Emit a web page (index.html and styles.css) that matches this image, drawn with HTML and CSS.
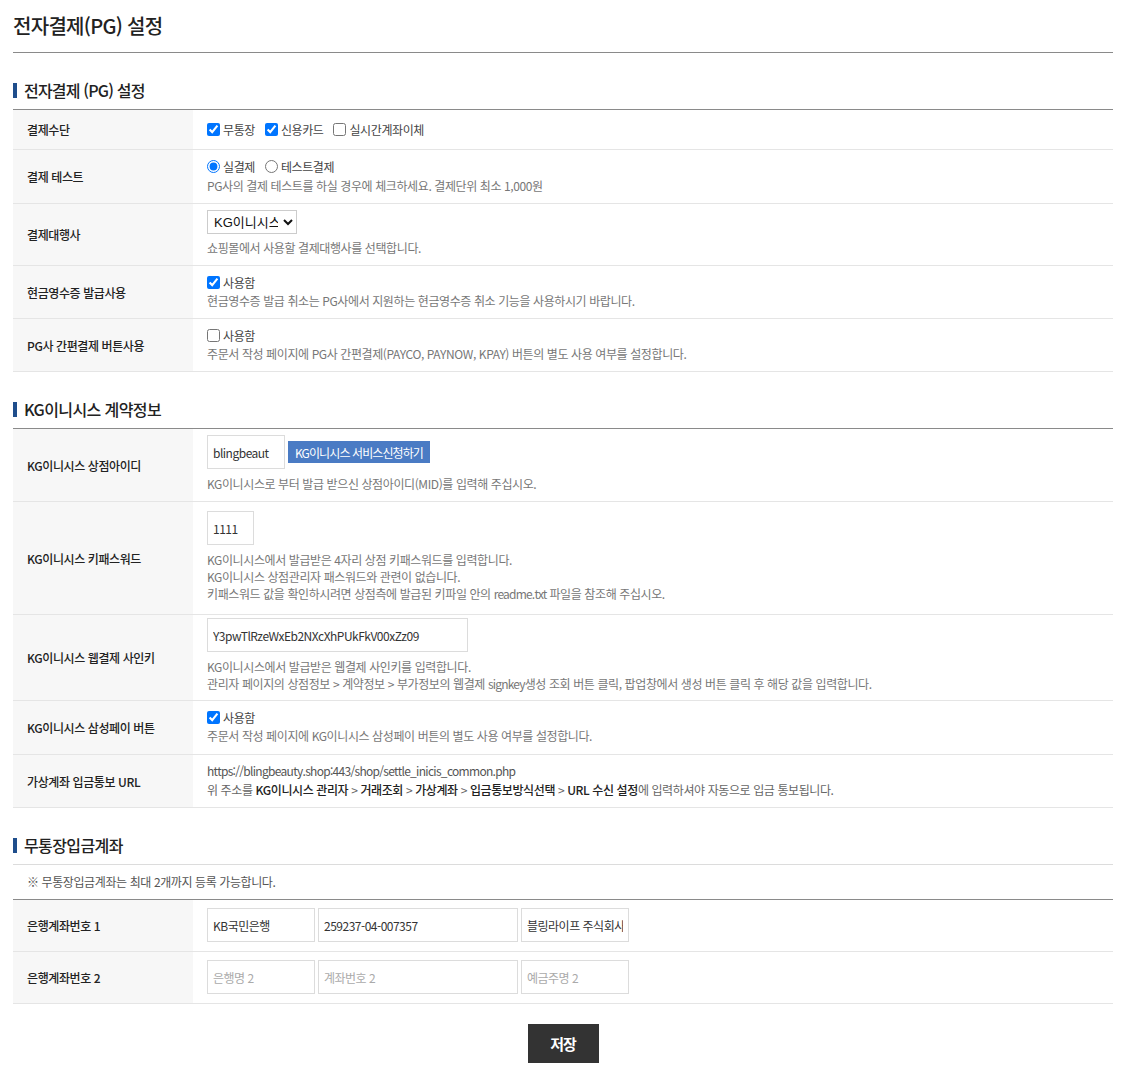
FILE: index.html
```html
<!DOCTYPE html>
<html lang="ko">
<head>
<meta charset="utf-8">
<title>전자결제(PG) 설정</title>
<link rel="stylesheet" href="styles.css">
</head>
<body>
<div class="page">
  <h1 class="page-title">전자결제(PG) 설정</h1>

  <section class="sec">
    <h2 class="sec-title t-pg">전자결제 (PG) 설정</h2>
    <div class="form">
      <div class="row">
        <div class="th">결제수단</div>
        <div class="td td-single">
          <div class="opts">
            <label class="opt"><input type="checkbox" checked>무통장</label>
            <label class="opt"><input type="checkbox" checked>신용카드</label>
            <label class="opt"><input type="checkbox">실시간계좌이체</label>
          </div>
        </div>
      </div>
      <div class="row">
        <div class="th">결제 테스트</div>
        <div class="td">
          <div class="opts opts-radio">
            <label class="opt"><input type="radio" name="test" checked>실결제</label>
            <label class="opt"><input type="radio" name="test">테스트결제</label>
          </div>
          <p class="desc">PG사의 결제 테스트를 하실 경우에 체크하세요. 결제단위 최소 1,000원</p>
        </div>
      </div>
      <div class="row">
        <div class="th">결제대행사</div>
        <div class="td">
          <div class="ctrl ctrl-sel">
            <select class="sel"><option>KG이니시스</option></select>
          </div>
          <p class="desc">쇼핑몰에서 사용할 결제대행사를 선택합니다.</p>
        </div>
      </div>
      <div class="row">
        <div class="th">현금영수증 발급사용</div>
        <div class="td">
          <div class="opts">
            <label class="opt"><input type="checkbox" checked>사용함</label>
          </div>
          <p class="desc">현금영수증 발급 취소는 PG사에서 지원하는 현금영수증 취소 기능을 사용하시기 바랍니다.</p>
        </div>
      </div>
      <div class="row">
        <div class="th">PG사 간편결제 버튼사용</div>
        <div class="td">
          <div class="opts">
            <label class="opt"><input type="checkbox">사용함</label>
          </div>
          <p class="desc">주문서 작성 페이지에 PG사 간편결제(PAYCO, PAYNOW, KPAY) 버튼의 별도 사용 여부를 설정합니다.</p>
        </div>
      </div>
    </div>
  </section>

  <section class="sec">
    <h2 class="sec-title t-kg">KG이니시스 계약정보</h2>
    <div class="form">
      <div class="row">
        <div class="th">KG이니시스 상점아이디</div>
        <div class="td">
          <div class="ctrl">
            <input class="inp w-mid" type="text" value="blingbeaut">
            <a class="btn-blue">KG이니시스 서비스신청하기</a>
          </div>
          <p class="desc">KG이니시스로 부터 발급 받으신 상점아이디(MID)를 입력해 주십시오.</p>
        </div>
      </div>
      <div class="row">
        <div class="th">KG이니시스 키패스워드</div>
        <div class="td td-key">
          <div class="ctrl">
            <input class="inp w-key" type="text" value="1111">
          </div>
          <p class="desc">KG이니시스에서 발급받은 4자리 상점 키패스워드를 입력합니다.<br>KG이니시스 상점관리자 패스워드와 관련이 없습니다.<br>키패스워드 값을 확인하시려면 상점측에 발급된 키파일 안의 <span class="latin">readme.txt</span> 파일을 참조해 주십시오.</p>
        </div>
      </div>
      <div class="row">
        <div class="th">KG이니시스 웹결제 사인키</div>
        <div class="td td-sign">
          <div class="ctrl">
            <input class="inp w-sign" type="text" value="Y3pwTlRzeWxEb2NXcXhPUkFkV00xZz09">
          </div>
          <p class="desc">KG이니시스에서 발급받은 웹결제 사인키를 입력합니다.<br>관리자 페이지의 상점정보 &gt; 계약정보 &gt; 부가정보의 웹결제 <span class="latin">signkey</span>생성 조회 버튼 클릭, 팝업창에서 생성 버튼 클릭 후 해당 값을 입력합니다.</p>
        </div>
      </div>
      <div class="row">
        <div class="th">KG이니시스 삼성페이 버튼</div>
        <div class="td td-sp">
          <div class="opts">
            <label class="opt"><input type="checkbox" checked>사용함</label>
          </div>
          <p class="desc">주문서 작성 페이지에 KG이니시스 삼성페이 버튼의 별도 사용 여부를 설정합니다.</p>
        </div>
      </div>
      <div class="row">
        <div class="th">가상계좌 입금통보 URL</div>
        <div class="td">
          <div class="url">https://blingbeauty.shop:443/shop/settle_inicis_common.php</div>
          <p class="desc desc-url">위 주소를 <strong>KG이니시스 관리자</strong> &gt; <strong>거래조회</strong> &gt; <strong>가상계좌</strong> &gt; <strong>입금통보방식선택</strong> &gt; <strong>URL 수신 설정</strong>에 입력하셔야 자동으로 입금 통보됩니다.</p>
        </div>
      </div>
    </div>
  </section>

  <section class="sec">
    <h2 class="sec-title sec-title-light">무통장입금계좌</h2>
    <p class="note">※ 무통장입금계좌는 최대 2개까지 등록 가능합니다.</p>
    <div class="form">
      <div class="row">
        <div class="th">은행계좌번호 1</div>
        <div class="td td-bank">
          <div class="bank">
            <input class="inp w-bank" type="text" value="KB국민은행">
            <input class="inp w-acct" type="text" value="259237-04-007357">
            <input class="inp w-bank" type="text" value="블링라이프 주식회사">
          </div>
        </div>
      </div>
      <div class="row">
        <div class="th">은행계좌번호 2</div>
        <div class="td td-bank">
          <div class="bank">
            <input class="inp w-bank" type="text" placeholder="은행명 2">
            <input class="inp w-acct" type="text" placeholder="계좌번호 2">
            <input class="inp w-bank" type="text" placeholder="예금주명 2">
          </div>
        </div>
      </div>
    </div>
  </section>

  <div class="actions">
    <button class="btn-save" type="button">저장</button>
  </div>
</div>
</body>
</html>
```

FILE: styles.css
```css
* { box-sizing: border-box; }

html, body {
  margin: 0;
  padding: 0;
  background: #fff;
}

body {
  font-family: "Noto Sans CJK KR", "Noto Sans", sans-serif;
  font-size: 12px;
  color: #333;
  letter-spacing: -0.4px;
}

.page {
  width: 1100px;
  margin-left: 13px;
  padding-bottom: 8px;
}

.page-title {
  margin: 0;
  padding: 11px 0 11px;
  font-size: 20px;
  line-height: 30px;
  font-weight: 500;
  letter-spacing: -0.7px;
  color: #222;
  border-bottom: 1px solid #8a8a8a;
}

.sec-title {
  display: flex;
  align-items: center;
  gap: 7px;
  margin: 26px 0 0;
  padding-bottom: 8px;
  font-size: 16px;
  line-height: 22px;
  font-weight: 500;
  color: #222;
  border-bottom: 1px solid #8a8a8a;
}

.t-pg { letter-spacing: -0.8px; }
.t-kg { letter-spacing: -0.6px; }

.sec-title::before {
  content: "";
  width: 4px;
  height: 15px;
  background: #1f4e8c;
  flex: none;
}

.sec-title-light {
  margin-top: 26px;
  letter-spacing: -0.6px;
  border-bottom-color: #dcdcdc;
}

.note {
  margin: 0;
  padding: 0 14px;
  line-height: 34px;
  color: #555;
  border-bottom: 1px solid #8a8a8a;
}

.row {
  display: grid;
  grid-template-columns: 180px 1fr;
  min-height: 40px;
  border-bottom: 1px solid #e5e5e5;
}

.th {
  display: flex;
  align-items: center;
  padding: 0 14px;
  background: #f7f7f7;
  font-weight: 500;
  color: #222;
}

.td {
  display: flex;
  flex-direction: column;
  justify-content: center;
  padding: 6px 14px 9px;
}

.td-single { padding: 0 14px; }
.td-key { padding: 9px 14px 12px; }
.td-sign { padding: 3px 14px 8px; }
.td-sp { padding: 6px 14px 10px; }
.td-bank { padding: 8px 14px 9px; }

.opts {
  display: flex;
  align-items: center;
  height: 20px;
  color: #444;
}

.opts-radio { height: 21px; }

.opt {
  display: inline-flex;
  align-items: center;
  margin-right: 10px;
}

.opt input {
  margin: 0 3px 0 0;
  width: 13px;
  height: 13px;
}

.desc {
  margin: 0;
  line-height: 17px;
  color: #777;
}

.latin { letter-spacing: -0.8px; }

.desc-url { color: #666; }
.desc strong { font-weight: 500; color: #222; }

.url {
  line-height: 20px;
  color: #555;
  letter-spacing: -0.7px;
}

.ctrl {
  display: flex;
  align-items: center;
  margin-bottom: 6px;
}

.ctrl-sel { margin-bottom: 5px; }

.sel {
  width: 90px;
  height: 24px;
  border: 1px solid #ccc;
  border-radius: 0;
  background: #fff;
  font-family: "Liberation Sans", "Noto Sans CJK KR", sans-serif;
  font-size: 13px;
  letter-spacing: 0;
  color: #111;
  padding: 0 2px;
}

.inp {
  height: 34px;
  border: 1px solid #dcdcdc;
  border-radius: 0;
  padding: 0 5px;
  font-family: "Noto Sans CJK KR", "Noto Sans", sans-serif;
  font-size: 12px;
  letter-spacing: -0.5px;
  color: #333;
  background: #fff;
}

.inp::placeholder { color: #aaa; }

.w-mid { width: 78px; }
.w-key { width: 47px; }
.w-sign { width: 261px; }
.w-bank { width: 108px; }
.w-acct { width: 200px; }

.btn-blue {
  display: inline-flex;
  align-items: center;
  justify-content: center;
  width: 142px;
  height: 22px;
  margin-left: 3px;
  background: #4a7bc4;
  color: #fff;
  letter-spacing: -0.9px;
  text-decoration: none;
}

.bank {
  display: flex;
  gap: 3px;
}

.actions {
  display: flex;
  justify-content: center;
  margin-top: 20px;
}

.btn-save {
  width: 71px;
  height: 39px;
  border: 0;
  background: #333;
  color: #fff;
  font-family: "Noto Sans CJK KR", sans-serif;
  font-size: 15px;
  font-weight: 700;
  letter-spacing: -1px;
  cursor: pointer;
}
```
